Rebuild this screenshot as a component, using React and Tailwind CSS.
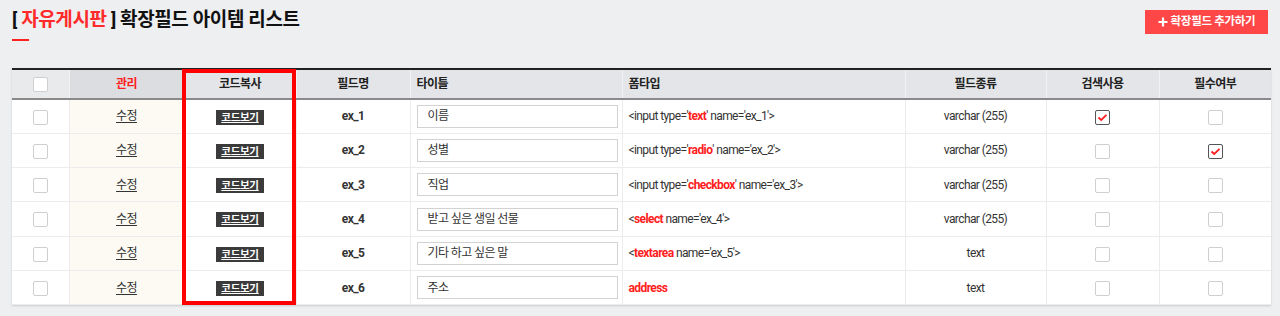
const rows = [
  { name: "ex_1", title: "이름", form: ["<input type='", "text", "' name='ex_1'>"], kind: "varchar (255)", search: true, required: false },
  { name: "ex_2", title: "성별", form: ["<input type='", "radio", "' name='ex_2'>"], kind: "varchar (255)", search: false, required: true },
  { name: "ex_3", title: "직업", form: ["<input type='", "checkbox", "' name='ex_3'>"], kind: "varchar (255)", search: false, required: false },
  { name: "ex_4", title: "받고 싶은 생일 선물", form: ["<", "select", " name='ex_4'>"], kind: "varchar (255)", search: false, required: false },
  { name: "ex_5", title: "기타 하고 싶은 말", form: ["<", "textarea", " name='ex_5'>"], kind: "text", search: false, required: false },
  { name: "ex_6", title: "주소", form: ["", "address", ""], kind: "text", search: false, required: false },
];

function Box({ checked }) {
  if (checked) {
    return (
      <span className="inline-flex h-[15px] w-[15px] items-center justify-center rounded-[2px] border border-[#555] bg-white align-middle">
        <svg width="11" height="9" viewBox="0 0 11 9">
          <path d="M1.5 4.5 L4.2 7 L9.5 1.8" fill="none" stroke="#ff1e1e" strokeWidth="1.8" />
        </svg>
      </span>
    );
  }
  return <span className="inline-block h-[15px] w-[15px] rounded-[2px] border border-[#cfcfcf] bg-white align-middle" />;
}

export default function App() {
  const th = "h-[30px] border-l border-[#f2f2f2] text-[12px] font-bold text-[#222] first:border-l-0";
  const td = "h-[34.3px] border-l border-b border-[#ececec] text-[12px] text-[#333] first:border-l-0";
  return (
    <div className="min-h-[316px] bg-[#eeeff1] px-3 pt-[7px]" style={{ fontFamily: "Roboto, 'Noto Sans CJK KR', sans-serif" }}>
      <div className="flex items-start justify-between">
        <div>
          <h1 className="text-[19px] font-bold leading-[26px] tracking-[-0.4px] text-[#111]">
            [ <span className="text-[#ff2a2a]">자유게시판</span> ] 확장필드 아이템 리스트
          </h1>
          <div className="mt-[6px] h-[2px] w-[17px] bg-[#ff2020]" />
        </div>
        <button className="mt-[3px] flex h-[24px] w-[123px] items-center justify-center gap-[3px] bg-[#ff4747] text-[11.5px] font-bold tracking-[-0.3px] text-white">
          <svg width="10" height="10" viewBox="0 0 10 10">
            <path d="M5 0.5 V9.5 M0.5 5 H9.5" stroke="white" strokeWidth="2.2" />
          </svg>
          확장필드 추가하기
        </button>
      </div>

      <div className="relative mt-[27px]">
        <table className="w-[1259px] table-fixed border-collapse border-t-2 border-[#222] bg-white tracking-[-0.6px] shadow-[0_1px_2px_rgba(0,0,0,0.15)]">
          <colgroup>
            <col className="w-[57px]" />
            <col className="w-[115px]" />
            <col className="w-[112px]" />
            <col className="w-[114px]" />
            <col className="w-[212px]" />
            <col className="w-[283px]" />
            <col className="w-[141px]" />
            <col className="w-[113px]" />
            <col className="w-[112px]" />
          </colgroup>
          <thead>
            <tr className="border-b-2 border-[#8a8a8a] bg-[#e4e5e8]">
              <th className={th + " bg-[#e9eaec]"}><Box /></th>
              <th className={th + " bg-[#dcdde0] text-[#ff2020]"}>관리</th>
              <th className={th}>코드복사</th>
              <th className={th}>필드명</th>
              <th className={th + " pl-[6px] text-left"}>타이틀</th>
              <th className={th + " pl-[6px] text-left"}>폼타입</th>
              <th className={th}>필드종류</th>
              <th className={th}>검색사용</th>
              <th className={th}>필수여부</th>
            </tr>
          </thead>
          <tbody>
            {rows.map((r) => (
              <tr key={r.name}>
                <td className={td + " text-center"}><Box /></td>
                <td className={td + " bg-[#fdfaf4] text-center"}><span className="underline underline-offset-2">수정</span></td>
                <td className={td + " text-center"}>
                  <span className="inline-block h-[15px] w-[48px] bg-[#3b3b3b] align-middle text-[10.5px] font-bold leading-[15px] tracking-[-0.3px] text-white underline underline-offset-[1px]">코드보기</span>
                </td>
                <td className={td + " text-center font-bold text-[#222]"}>{r.name}</td>
                <td className={td + " px-[6px]"}>
                  <div className="flex h-[23px] w-[201px] items-center border border-[#d2d2d2] pl-[10px]">{r.title}</div>
                </td>
                <td className={td + " pl-[6px]"}>
                  {r.form[0]}<span className="font-bold text-[#ff2020]">{r.form[1]}</span>{r.form[2]}
                </td>
                <td className={td + " text-center"}>{r.kind}</td>
                <td className={td + " text-center"}><Box checked={r.search} /></td>
                <td className={td + " text-center"}><Box checked={r.required} /></td>
              </tr>
            ))}
          </tbody>
        </table>
        <div className="pointer-events-none absolute bottom-0 left-[170px] top-[1px] w-[114px] border-4 border-[#ff0000]" />
      </div>
    </div>
  );
}
